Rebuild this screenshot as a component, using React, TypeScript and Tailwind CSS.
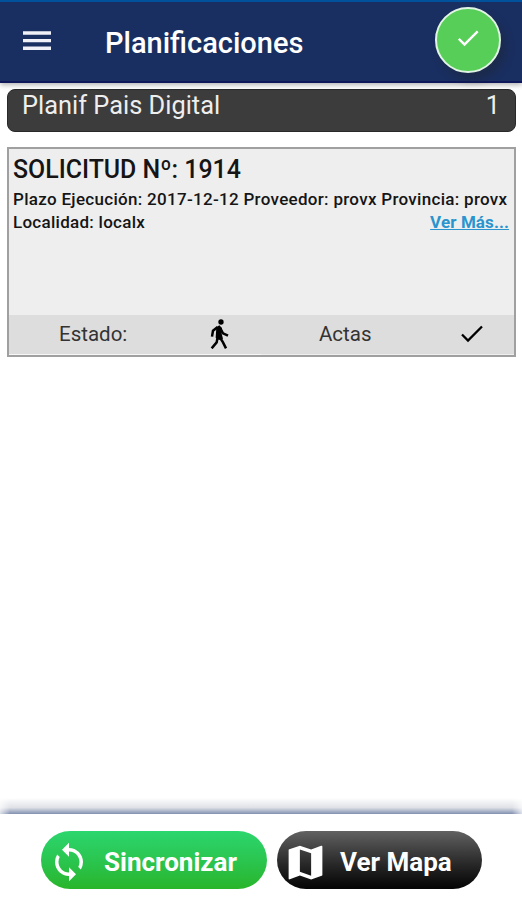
import type { ReactNode } from "react";
import { MdCheck, MdMap, MdSync } from "react-icons/md";

function Header() {
  return (
    <header className="relative z-10 flex h-[83px] items-start border-t-2 border-b-2 border-t-[#00529c] border-b-[#10185c] bg-[#1a2f61] pl-[18px] shadow-[0_2px_5px_rgba(0,0,0,0.3)]">
      <button className="mt-[20px] text-[#f0f0f8]" aria-label="Menú">
        <svg width="37" height="37" viewBox="0 0 37 37" fill="currentColor">
          <path d="M5 9.3h28v3.5H5zM5 17h28v3.3H5zM5 24.6h28V28H5z" />
        </svg>
      </button>
      <h1 className="mt-[23px] ml-[50px] w-[330px] text-[29px] leading-[36px] font-medium whitespace-nowrap text-white">
        Planificaciones
      </h1>
      <button
        className="mt-[5px] flex h-[66px] w-[66px] shrink-0 items-center justify-center rounded-full border-2 border-[#e1f4e5] bg-[#56ce57] pb-[4px] text-white shadow-[5px_7px_9px_rgba(30,35,45,0.4)]"
        aria-label="Listo"
      >
        <MdCheck size={28} />
      </button>
    </header>
  );
}

function WalkIcon() {
  return (
    <svg width="20" height="30" viewBox="45 26 60 90" fill="none" stroke="currentColor" strokeWidth="7.5">
      <circle cx="78" cy="35" r="8" fill="currentColor" stroke="none" />
      <path d="M64 51 L73 45 L81 53 L80 70 L84 85 L72 89 L62 82 Z" fill="currentColor" stroke="none" />
      <path d="M68 50 L54 61 L51 79" />
      <path d="M76 54 L84 69 L99 76" />
      <path d="M68 80 L65 96 L50 114" />
      <path d="M74 80 L84 96 L93 114" />
    </svg>
  );
}

function DoneIcon() {
  return (
    <svg width="24" height="20" viewBox="0 0 24 20" fill="none" stroke="currentColor" strokeWidth="2.3">
      <path d="M2 10.5 L8 16.5 L22 2.5" />
    </svg>
  );
}

function RequestCard() {
  return (
    <article className="mr-[6px] ml-[7px] mt-[15px] flex h-[210px] flex-col border-2 border-[#a0a0a0] bg-[#eeeeee] text-[#151515]">
      <div className="flex-1 pt-[4px] pl-[4px]">
        <h2 className="text-[24.9px] leading-[33px] font-medium whitespace-nowrap">SOLICITUD Nº: 1914</h2>
        <p className="mt-[2px] text-[17px] leading-[23px] font-medium tracking-[0.3px] whitespace-nowrap">
          Plazo Ejecución: 2017-12-12 Proveedor: provx Provincia: provx
        </p>
        <div className="flex justify-between pr-[5px] text-[17px] leading-[23px] font-medium tracking-[0.27px] whitespace-nowrap">
          <span>Localidad: localx</span>
          <a className="font-bold tracking-[0.1px] text-[#2a94cf] underline">Ver Más...</a>
        </div>
      </div>
      <footer className="flex h-[39px] items-center bg-[#dddddd] text-[20.5px] text-[#333333]">
        <span className="w-[142px] pl-[50px]">Estado:</span>
        <span className="mb-[2px] ml-[59px] text-black">
          <WalkIcon />
        </span>
        <span className="ml-[89px] w-[52px]">Actas</span>
        <span className="mb-[2px] ml-[89px] text-black">
          <DoneIcon />
        </span>
      </footer>
      <div className="h-px w-[252px] bg-[#f7f7f7]" />
    </article>
  );
}

function ActionButton({ icon, label, className }: { icon: ReactNode; label: string; className: string }) {
  return (
    <button
      className={`flex h-[58px] items-center rounded-full text-[26px] font-bold whitespace-nowrap text-white ${className}`}
    >
      {icon}
      <span className="mt-[4px]">{label}</span>
    </button>
  );
}

export default function App() {
  return (
    <div className="flex h-[900px] w-[522px] flex-col overflow-hidden bg-white font-['Roboto','Liberation_Sans',sans-serif]">
      <Header />
      <div className="mr-[6px] ml-[7px] mt-[6px] flex h-[43px] justify-between rounded-[8px] border border-[#292929] bg-[#3c3c3c] pr-[15px] pl-[14px] text-[25.4px] leading-[31px] text-[#eeeeee]">
        <span>Planif Pais Digital</span>
        <span>1</span>
      </div>
      <RequestCard />
      <div className="flex-1" />
      <div className="h-[16px] bg-linear-to-b from-white via-[#dfe1e6] via-60% to-[#8290b0] [mask-image:linear-gradient(to_right,rgba(0,0,0,0.3),black_10px,black_calc(100%-10px),rgba(0,0,0,0.3))]" />
      <footer className="flex h-[86px] shrink-0 items-start gap-[10px] bg-white pt-[17px] pl-[41px]">
        <ActionButton
          icon={<MdSync size={42} className="mt-[3px] mr-[14px]" />}
          label="Sincronizar"
          className="w-[226px] bg-linear-to-b from-[#2cd66e] to-[#29b529] pl-[7px]"
        />
        <ActionButton
          icon={<MdMap size={45} className="mt-[4px] mr-[12px]" />}
          label="Ver Mapa"
          className="w-[205px] bg-linear-to-b from-[#626262] to-[#050505] pl-[6px]"
        />
      </footer>
    </div>
  );
}
